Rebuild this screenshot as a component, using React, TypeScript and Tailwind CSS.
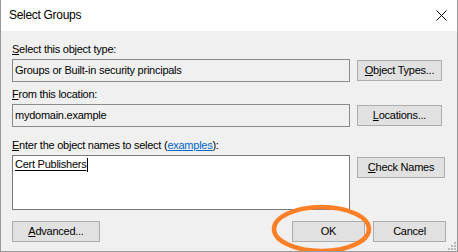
import React from "react";

const font = { fontFamily: '"Liberation Sans", Arial, sans-serif' };

function Btn({ children, w }: { children: React.ReactNode; w: string }) {
  return (
    <div
      className={`${w} h-[21px] shrink-0 border border-[#adadad] bg-[#e1e1e1] flex items-center justify-center text-[11px] text-black leading-none`}
    >
      {children}
    </div>
  );
}

export default function App() {
  return (
    <div
      className="relative w-[458px] h-[252px] overflow-hidden bg-[#f0f0f0] border-x border-b border-[#9a9a9a] flex flex-col text-black"
      style={font}
    >
      {/* title bar */}
      <div className="h-[31px] shrink-0 bg-white flex items-center justify-between pl-[8px] pr-[10px]">
        <span className="text-[12px] leading-none mt-[-1px] tracking-[-0.3px]">Select Groups</span>
        <svg width="11" height="11" viewBox="0 0 11 11">
          <path d="M0.5 0.5 L10.5 10.5 M10.5 0.5 L0.5 10.5" stroke="#000" strokeWidth="1" />
        </svg>
      </div>

      <div className="flex-1 flex flex-col px-[11px] pt-[12px] text-[11px] leading-[13px] tracking-[-0.25px]">
        <div>
          <span className="underline">S</span>elect this object type:
        </div>
        <div className="mt-[3px] flex items-center gap-[7px]">
          <div className="w-[338px] h-[23px] border border-[#8a8a8a] bg-[#f0f0f0] flex items-center pl-[2px]">
            Groups or Built-in security principals
          </div>
          <Btn w="w-[85px]">
            <span>
              <span className="underline">O</span>bject Types...
            </span>
          </Btn>
        </div>

        <div className="mt-[6px]">
          <span className="underline">F</span>rom this location:
        </div>
        <div className="mt-[3px] flex items-center gap-[7px]">
          <div className="w-[338px] h-[23px] border border-[#8a8a8a] bg-[#f0f0f0] flex items-center pl-[2px]">
            mydomain.example
          </div>
          <Btn w="w-[85px]">
            <span>
              <span className="underline">L</span>ocations...
            </span>
          </Btn>
        </div>

        <div className="mt-[12px]">
          <span className="underline">E</span>nter the object names to select (
          <span className="text-[#0066cc] underline">examples</span>):
        </div>
        <div className="mt-[3px] flex items-start gap-[7px]">
          <div className="w-[338px] h-[55px] border border-[#7a7a7a] bg-white pl-[2px] pt-[2px]">
            <div className="flex items-start">
              <span className="underline underline-offset-[2px]">Cert Publishers</span>
              <span className="w-px h-[14px] bg-black ml-[1px]" />
            </div>
          </div>
          <div className="mt-[2px]">
            <Btn w="w-[88px]">
              <span>
                <span className="underline">C</span>heck Names
              </span>
            </Btn>
          </div>
        </div>

        <div className="mt-[11px] flex items-center">
          <Btn w="w-[88px]">
            <span>
              <span className="underline">A</span>dvanced...
            </span>
          </Btn>
          <div className="flex-1" />
          <Btn w="w-[73px]">OK</Btn>
          <div className="w-[8px]" />
          <Btn w="w-[73px]">Cancel</Btn>
        </div>
      </div>

      {/* resize grip */}
      <svg width="8" height="8" viewBox="0 0 8 8" className="absolute right-[1px] bottom-[1px]">
        <rect x="6" y="0" width="2" height="2" fill="#b8b8b8" />
        <rect x="3" y="3" width="2" height="2" fill="#b8b8b8" />
        <rect x="6" y="3" width="2" height="2" fill="#b8b8b8" />
        <rect x="0" y="6" width="2" height="2" fill="#b8b8b8" />
        <rect x="3" y="6" width="2" height="2" fill="#b8b8b8" />
        <rect x="6" y="6" width="2" height="2" fill="#b8b8b8" />
      </svg>

      {/* orange annotation ellipse */}
      <svg width="458" height="252" className="absolute left-[-1px] top-0 pointer-events-none">
        <ellipse cx="321.5" cy="229" rx="47.5" ry="22" fill="none" stroke="#ff7f27" strokeWidth="4.5" />
      </svg>
    </div>
  );
}
